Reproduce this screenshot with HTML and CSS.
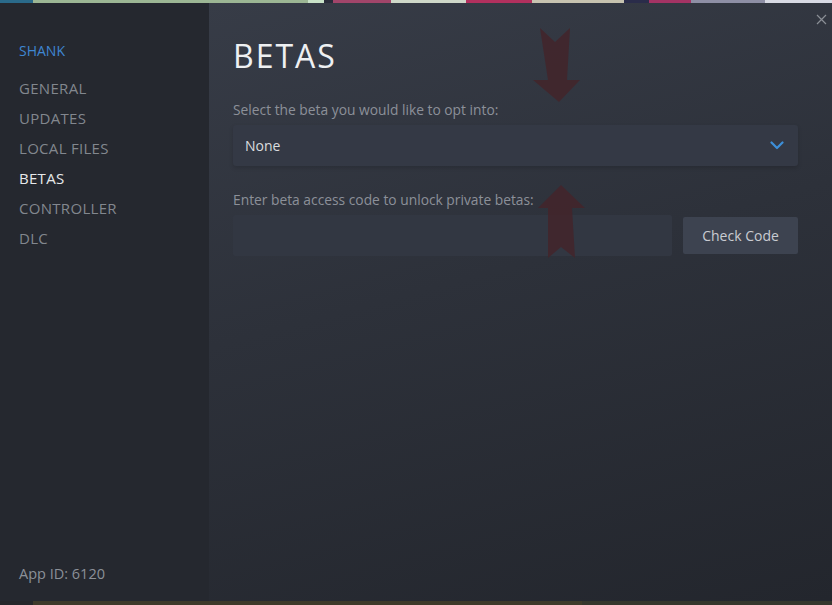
FILE: index.html
```html
<!DOCTYPE html>
<html>
<head>
<meta charset="utf-8">
<link rel="stylesheet" href="styles.css">
</head>
<body>
<div class="strip-top"></div>
<div class="window">
  <aside class="sidebar">
    <div class="game">SHANK</div>
    <nav class="menu">
      <div class="item">GENERAL</div>
      <div class="item">UPDATES</div>
      <div class="item">LOCAL FILES</div>
      <div class="item active">BETAS</div>
      <div class="item">CONTROLLER</div>
      <div class="item">DLC</div>
    </nav>
    <div class="appid">App ID: 6120</div>
  </aside>
  <main class="content">
    <h1 class="title">BETAS</h1>
    <div class="label">Select the beta you would like to opt into:</div>
    <div class="select">
      <span>None</span>
      <svg class="chev" width="14" height="9" viewBox="0 0 14 9"><path d="M1.5 1.5 L7 7 L12.5 1.5" fill="none" stroke="#3d8fd8" stroke-width="2.2" stroke-linecap="round" stroke-linejoin="round"/></svg>
    </div>
    <div class="label label2">Enter beta access code to unlock private betas:</div>
    <div class="coderow">
      <div class="input"></div>
      <div class="btn">Check Code</div>
    </div>
  </main>
  <div class="close">
    <svg width="11" height="11" viewBox="0 0 11 11"><path d="M1 1 L10 10 M10 1 L1 10" stroke="#8a8e95" stroke-width="1.2"/></svg>
  </div>
  <svg class="arrows" width="832" height="598" viewBox="0 0 832 598">
    <path d="M540 25 L555 39 L570 25 L567 77 L580 77 L559 99 L533 77 L548 77 Z" fill="#43242a" opacity="0.85"/>
    <path d="M561 182 L585 205 L572 205 L575 255 L561 244 L548 255 L548 205 L538 205 Z" fill="#43242a" opacity="0.85"/>
  </svg>
</div>
<div class="strip-bottom"></div>
</body>
</html>
```
FILE: styles.css
```css
html, body {
  margin: 0;
  padding: 0;
  background: #23262d;
}
body {
  width: 832px;
  height: 605px;
  overflow: hidden;
  font-family: "Open Sans", "Lato", sans-serif;
}
.strip-top {
  height: 3px;
  background: linear-gradient(90deg, #2a6a8a 0 4%, #9cb694 4% 37%, #c9e2c8 37% 39%, #2a2c3a 39% 40%, #a2456a 40% 47%, #cfd8c9 47% 56%, #b2305e 56% 64%, #c7c3b0 64% 75%, #2a2c4a 75% 78%, #a43364 78% 83%, #8e8fa5 83% 92%, #d8dae4 92% 100%);
}
.window {
  position: relative;
  display: flex;
  height: 598px;
}
.sidebar {
  width: 209px;
  flex: none;
  background: #25282f;
  display: flex;
  flex-direction: column;
  padding: 0 0 0 19px;
  box-sizing: border-box;
}
.game {
  margin-top: 39px;
  font-size: 14px;
  color: #3f86d2;
  line-height: 18px;
}
.menu {
  margin-top: 13px;
  display: flex;
  flex-direction: column;
}
.item {
  font-size: 15px;
  letter-spacing: 0.3px;
  line-height: 30px;
  color: #82878e;
}
.item.active {
  color: #e6e8ea;
}
.appid {
  margin-top: auto;
  margin-bottom: 17px;
  font-size: 14.5px;
  color: #8b9098;
  line-height: 20px;
}
.content {
  flex: 1;
  padding: 0 34px 0 24px;
  background: linear-gradient(165deg, #373c47 0%, #2d313a 45%, #23262d 100%);
}
.title {
  margin: 31px 0 0;
  font-weight: 400;
  font-size: 32px;
  line-height: 44px;
  letter-spacing: 2px;
  color: #eef0f2;
}
.label {
  margin-top: 23px;
  font-size: 13.8px;
  line-height: 18px;
  color: #8c9099;
}
.select {
  margin-top: 6px;
  height: 41px;
  background: #343945;
  border-radius: 3px;
  display: flex;
  align-items: center;
  justify-content: space-between;
  padding: 0 14px 0 12px;
  font-size: 14px;
  color: #dadcdf;
  box-shadow: 0 2px 4px rgba(0,0,0,0.15);
}
.chev {
  display: block;
}
.label2 {
  margin-top: 25px;
}
.coderow {
  margin-top: 6px;
  display: flex;
  align-items: center;
  gap: 11px;
}
.input {
  flex: 1;
  height: 41px;
  background: #323742;
  border-radius: 2px;
}
.btn {
  width: 115px;
  height: 37px;
  background: #3d4350;
  border-radius: 2px;
  color: #c9ccd2;
  font-size: 14px;
  display: flex;
  align-items: center;
  justify-content: center;
}
.close {
  position: absolute;
  top: 5px;
  right: 5px;
}
.arrows {
  position: absolute;
  left: 0;
  top: 0;
  pointer-events: none;
}
.strip-bottom {
  height: 4px;
  background: linear-gradient(90deg, #25272a 0 4%, #3e3a2a 4% 70%, #35362c 70% 100%);
}
```
